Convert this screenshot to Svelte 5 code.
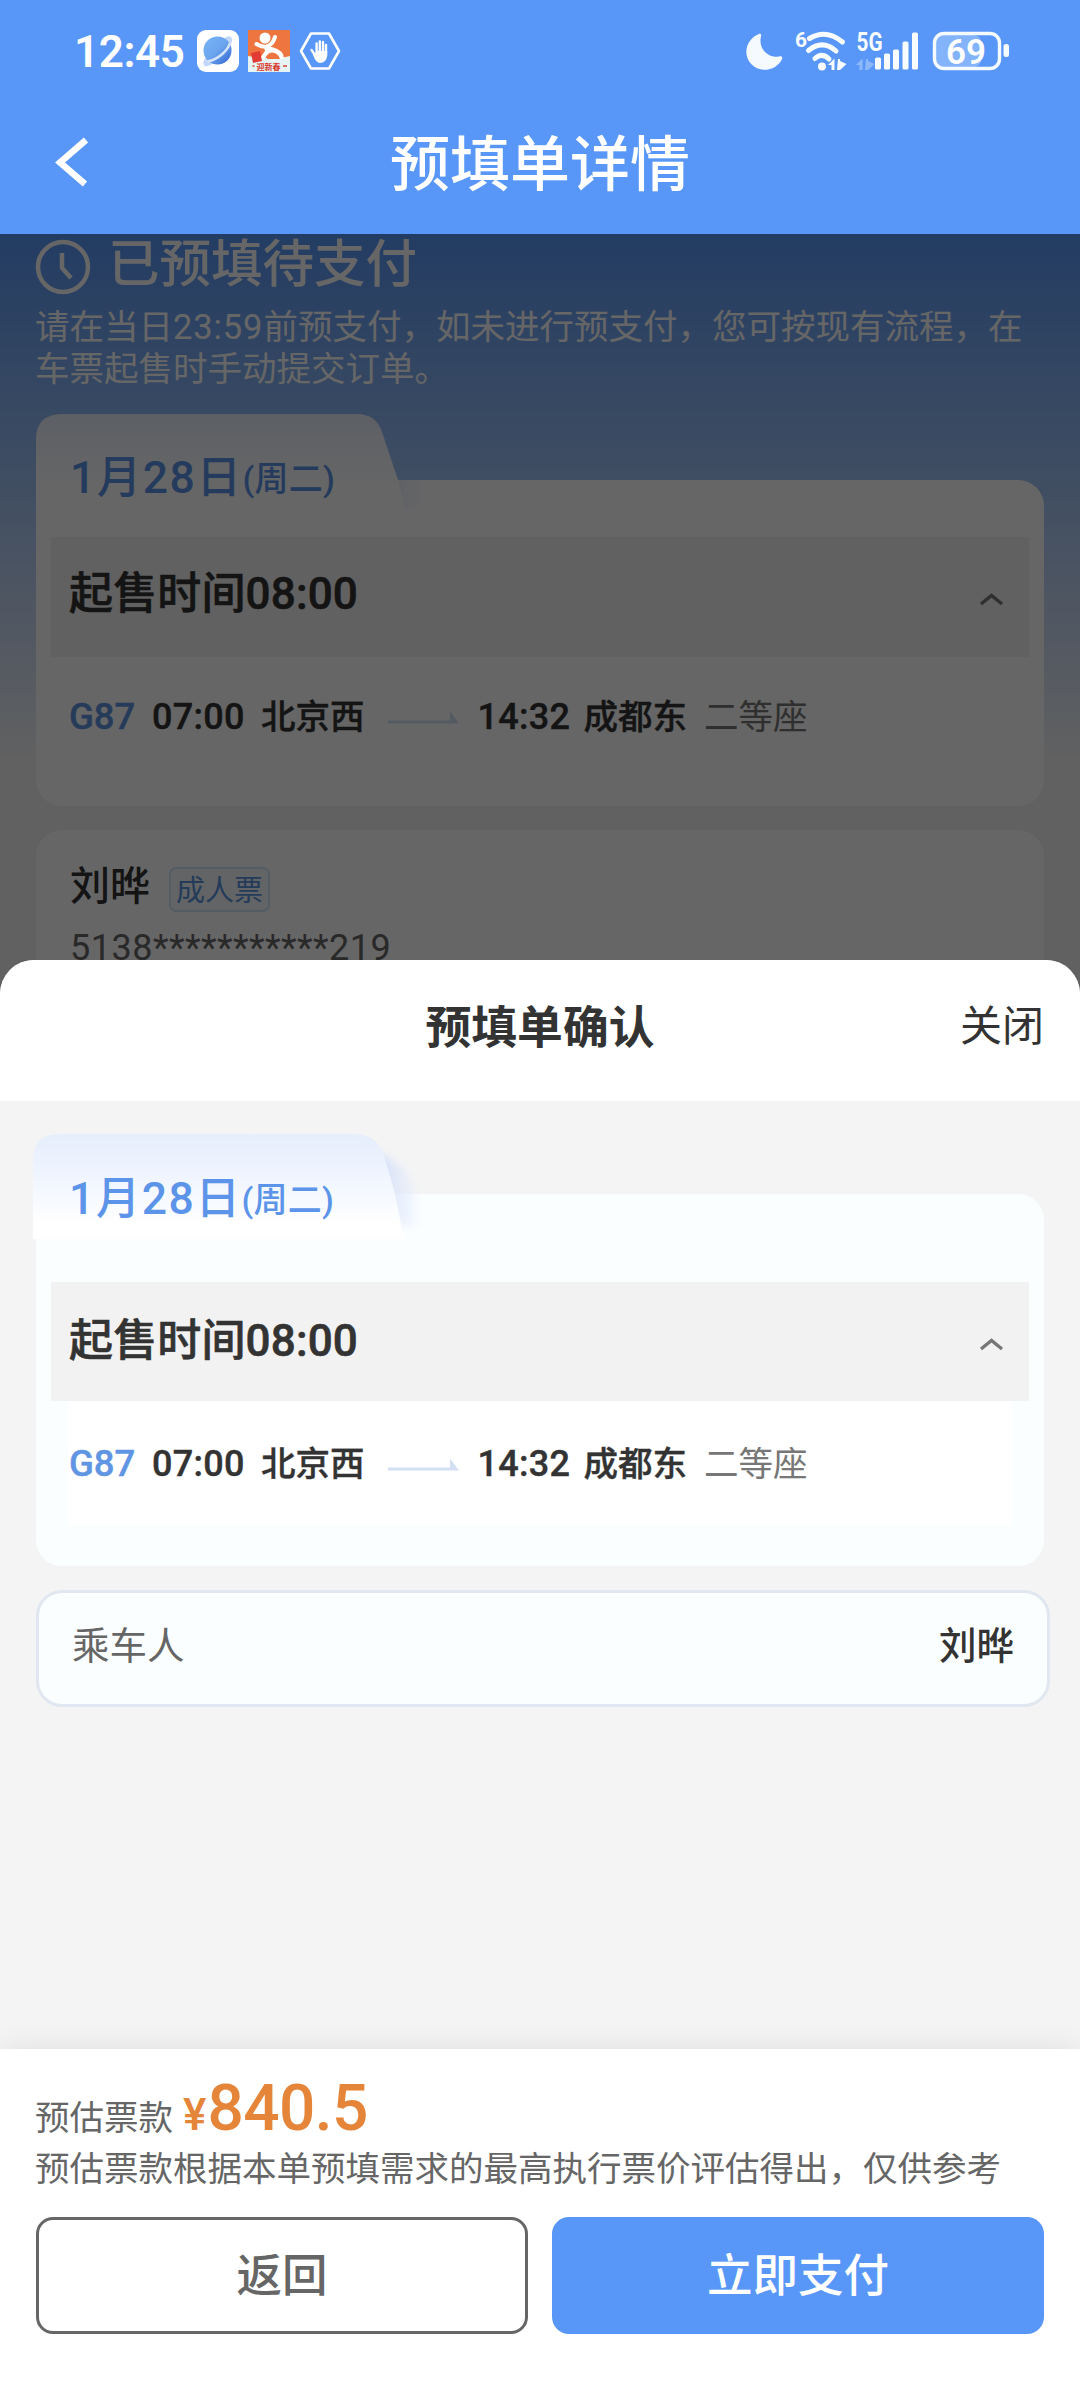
<script>
  const order = {
    date: '1月28日',
    week: '(周二)',
    saleTime: '起售时间08:00',
    train: 'G87',
    departTime: '07:00',
    from: '北京西',
    arriveTime: '14:32',
    to: '成都东',
    seat: '二等座'
  };
  const bars = [
    { x: 28, h: 12 },
    { x: 37, h: 16 },
    { x: 46, h: 20 },
    { x: 55.5, h: 28 },
    { x: 65, h: 37 }
  ];
</script>

{#snippet itinerary()}
  <div class="strip">
    <span class="sale">{order.saleTime}</span>
    <svg class="fold" width="24" height="14" viewBox="0 0 24 14">
      <path d="M2 12 L12.500 3.500 L23 12" fill="none" stroke="#777" stroke-width="3.400" />
    </svg>
  </div>
  <div class="leg">
    <span class="train">{order.train}</span>
    <span class="time">{order.departTime}</span>
    <span class="station">{order.from}</span>
    <svg class="arrow" width="71" height="14" viewBox="0 0 71 14">
      <path d="M0 9.5 H62 V0.5 L71 12.5 H0 Z" fill="#d3e0f3" />
    </svg>
    <span class="time arrive">{order.arriveTime}</span>
    <span class="station">{order.to}</span>
    <span class="seat">{order.seat}</span>
  </div>
{/snippet}

<div class="screen">
  <header>
    <div class="status">
      <span class="clock">12:45</span>
      <svg class="app" width="42" height="42" viewBox="0 0 42 42">
        <defs>
          <linearGradient id="globe" x1="0" y1="0" x2="1" y2="1">
            <stop offset="0" stop-color="#79b4f5" />
            <stop offset="0.5" stop-color="#6ba5ee" />
            <stop offset="1" stop-color="#2f62d0" />
          </linearGradient>
        </defs>
        <rect width="42" height="42" rx="9" fill="#fff" />
        <path d="M29 7 C36 4 37 11 32 18 C26 27 16 35 9 36.500 C5 36 6 31 9 27 Z" fill="#c3d8f8" />
        <circle cx="20.500" cy="20.500" r="14" fill="url(#globe)" />
        <path d="M33 13 C31 20 22 29 10.500 31.500" fill="none" stroke="#d5e4fb" stroke-width="2.600" />
      </svg>
      <svg class="app" width="42" height="42" viewBox="0 0 42 42">
        <rect width="42" height="42" fill="#ee7540" />
        <path d="M0 26 L12 28 L33 28 L42 26 V42 H0 Z" fill="#e6f5f4" />
        <path d="M19 29 Q20 24 26 24 Q32 24 34 29 Z" fill="#ee7540" />
        <circle cx="17" cy="8" r="5.500" fill="#fff" />
        <path d="M8.500 14 Q15 18 20 16 Q25 14 27 7" fill="none" stroke="#fff" stroke-width="4" stroke-linecap="round" />
        <path d="M16 17 L24 17 Q36 20 36 29 L32 29 Q30 22.500 24 22.500 Q19 23 17 29 L12 28 L17 21 Z" fill="#fff" />
        <path d="M3 23 L12 21 L14 31 L5 33 Z" fill="#e23a34" />
        <text x="8.500" y="40" class="tiny">迎新春</text>
        <path d="M4.500 36 h2 M35 36 h4" stroke="#d8442f" stroke-width="1.500" />
      </svg>
      <svg class="hand" width="42" height="38" viewBox="0 0 42 38">
        <path d="M12 1.5 H30 L40 19 L30 36.5 H12 L2 19 Z" fill="none" stroke="#fff" stroke-width="2.6" stroke-linejoin="round" />
        <path d="M12.5 18 L16 23 M17.6 22 V11.5 M20.8 22 V9.5 M24 22 V10 M27 23 V13" fill="none" stroke="#fff" stroke-width="2.4" stroke-linecap="round" />
        <path d="M14 20 L17 22 V19 H28.2 V24 Q27 31 21 31 Q17 31 14 23 Z" fill="#fff" />
      </svg>
      <span class="grow"></span>
      <svg class="moon" width="37" height="37" viewBox="0 0 37 37">
        <path d="M12.5 1.2 C14.5 0.2 15.6 1.5 15 3.6 C12 15 22 26 33 23.4 C35.5 22.7 37 24 36 26.2 C33 32.5 26 36.8 18.5 36.8 C8.5 36.8 0.3 28.8 0.3 18.8 C0.3 11 5.5 4 12.5 1.2 Z" fill="#f5faff" />
      </svg>
      <svg class="wifi" width="54" height="42" viewBox="0 0 54 42">
        <text x="0" y="17" class="six">6</text>
        <g fill="none" stroke="#f8fcff" stroke-width="5" stroke-linecap="round">
          <path d="M14.5 8.5 Q31 -1.500 47.500 12" />
          <path d="M13.5 20.5 Q27.5 9 41 21" />
          <path d="M20 28.5 Q27 22 34 29" />
        </g>
        <circle cx="27" cy="36.5" r="4" fill="#f8fcff" />
        <path d="M33 35 L39.5 28.5 V40 H36.5 V35 Z M43 29 H45 V31 L51.5 34 L45 40 H42 Z" fill="#f8fcff" />
      </svg>
      <svg class="signal" width="72" height="42" viewBox="0 0 72 42">
        <text x="0.5" y="20.500" class="fiveg" textLength="26" lengthAdjust="spacingAndGlyphs">5G</text>
        <path d="M0 35 L6.5 28.5 V40 H3.5 V35 Z M10 29 H12 V31 L18.5 34 L12 40 H9 Z" fill="#8db9fb" />
        {#each bars as b}
          <rect x={b.x - 9} y={39.5 - b.h} width="6" height={b.h} rx="1.5" fill="#f8fcff" />
        {/each}
      </svg>
      <svg class="battery" width="77" height="38" viewBox="0 0 77 38">
        <rect x="3" y="3" width="45" height="32" rx="7" fill="#83b3fb" />
        <rect x="1.5" y="1.5" width="65" height="35" rx="9.5" fill="none" stroke="#f5faff" stroke-width="3.4" />
        <rect x="70.5" y="12" width="5.5" height="13" rx="2.5" fill="#f5faff" />
        <text x="33" y="31.500" class="pct">69</text>
      </svg>
    </div>
    <nav>
      <svg class="back" width="34" height="50" viewBox="0 0 34 50">
        <path d="M31 3 L5 25.5 L30 47" fill="none" stroke="#fff" stroke-width="6.5" stroke-linejoin="miter" />
      </svg>
      <h1>预填单详情</h1>
    </nav>
  </header>

  <main>
    <div class="state">
      <svg width="56" height="56" viewBox="0 0 56 56">
        <circle cx="28" cy="28" r="25" fill="none" stroke="#fff" stroke-width="4.5" />
        <path d="M27 14 V29 L36 39" fill="none" stroke="#fff" stroke-width="4.5" />
      </svg>
      <h2>已预填待支付</h2>
    </div>
    <p class="notice">请在当日<span class="deadline">23:59</span>前预支付，如未进行预支付，您可按现有流程，在车票起售时手动提交订单。</p>
    <section class="ticket">
      <svg class="tab" width="410" height="100" viewBox="0 0 410 100">
        <defs>
          <linearGradient id="tabA" x1="0" y1="0" x2="0" y2="1">
            <stop offset="0" stop-color="#e8effc" />
            <stop offset="0.75" stop-color="#fff" />
          </linearGradient>
          <linearGradient id="glowA" x1="0" y1="0" x2="1" y2="0">
            <stop offset="0" stop-color="#f0f4fd" />
            <stop offset="1" stop-color="#fff" />
          </linearGradient>
        </defs>
        <path d="M360 66 H392 V88 L369 96 Z" fill="url(#glowA)" />
        <path d="M0 26 Q0 0 26 0 H321 Q340 0 346 18 L362 66 L369 98 H0 Z" fill="url(#tabA)" />
      </svg>
      <div class="date"><b>{order.date}</b><i>{order.week}</i></div>
      <div class="card">{@render itinerary()}</div>
    </section>
    <section class="person">
      <div class="who"><b>刘晔</b><span class="badge">成人票</span></div>
      <div class="idno">5138***********219</div>
    </section>
    <div class="mask"></div>
  </main>

  <section class="sheet">
    <div class="sheet-head">
      <h3>预填单确认</h3>
      <span class="close">关闭</span>
    </div>
    <div class="sheet-body">
      <section class="ticket light">
        <svg class="tab" width="410" height="106" viewBox="0 0 410 106">
          <defs>
            <linearGradient id="tabB" x1="0" y1="0" x2="0" y2="1">
              <stop offset="0" stop-color="#e6eefc" />
              <stop offset="0.45" stop-color="#f1f6ff" />
              <stop offset="0.85" stop-color="#fff" />
            </linearGradient>
            <linearGradient id="glowB" x1="0" y1="0" x2="1" y2="0">
              <stop offset="0" stop-color="#cbdaf9" />
              <stop offset="1" stop-color="#e3ecfc" stop-opacity="0.3" />
            </linearGradient>
            <filter id="soft" x="-50%" y="-30%" width="200%" height="160%">
              <feGaussianBlur stdDeviation="4" />
            </filter>
          </defs>
          <path d="M340 18 Q366 24 378 46 Q388 68 382 92 L366 92 Z" fill="url(#glowB)" filter="url(#soft)" />
          <path d="M0 26 Q0 0 26 0 H321 Q342 0 350 18 L361 56 L371 105 H0 Z" fill="url(#tabB)" />
        </svg>
        <div class="date"><b>{order.date}</b><i>{order.week}</i></div>
        <div class="card">{@render itinerary()}</div>
      </section>
      <div class="rider"><span>乘车人</span><b>刘晔</b></div>
    </div>
    <footer>
      <div class="total">
        <span>预估票款</span><em>¥</em><strong>840.5</strong>
      </div>
      <p class="hint">预估票款根据本单预填需求的最高执行票价评估得出，仅供参考</p>
      <div class="actions">
        <button class="ghost">返回</button>
        <button class="primary">立即支付</button>
      </div>
    </footer>
  </section>
</div>

<style>
  :global(body) {
    margin: 0;
    background: #f4f4f4;
  }
  .screen {
    width: 1080px;
    height: 2400px;
    overflow: hidden;
    display: flex;
    flex-direction: column;
    font-family: Roboto, 'Noto Sans CJK SC', sans-serif;
    color: #333;
    position: relative;
  }
  .screen * {
    box-sizing: border-box;
  }
  h1, h2, h3, p {
    margin: 0;
  }
  h1, h2, h3, .close, .who, .rider {
    font-family: 'Noto Sans CJK SC', sans-serif;
  }
  b, i, em, strong {
    font-style: normal;
    font-weight: 500;
  }
  svg {
    overflow: visible;
    flex: none;
  }
  header {
    flex: none;
    height: 234px;
    background: #5897f7;
    color: #fff;
  }
  .status {
    height: 102px;
    padding: 0 70px 0 74px;
    display: flex;
    align-items: center;
  }
  .clock {
    font-size: 44px;
    font-weight: 600;
    width: 123px;
    line-height: 102px;
    letter-spacing: -0.4px;
    padding-top: 1px;
    white-space: nowrap;
  }
  .app {
    margin-right: 9px;
  }
  .grow {
    flex: 1;
  }
  .tiny {
    font-size: 8px;
    font-weight: 700;
    fill: #d8342a;
  }
  .six {
    font-size: 21px;
    font-weight: 700;
    fill: #f8fcff;
  }
  .fiveg {
    font-size: 26px;
    font-weight: 700;
    fill: #f8fcff;
  }
  .pct {
    font-size: 35px;
    font-weight: 600;
    fill: #fff;
    text-anchor: middle;
  }
  .moon {
    margin-right: 12px;
  }
  .wifi {
    margin-right: 7px;
  }
  .signal {
    margin-right: 5px;
  }
  nav {
    height: 132px;
    padding: 0 55px;
    display: grid;
    grid-template-columns: 34px 1fr 34px;
    align-items: start;
  }
  .back {
    margin-top: 35px;
  }
  h1 {
    font-size: 60px;
    font-weight: 500;
    line-height: 115px;
    text-align: center;
  }

  main {
    position: relative;
    z-index: 0;
    height: 766px;
    flex: none;
    overflow: hidden;
    padding: 0 36px;
    background: linear-gradient(#5897f7 0, #f3f3f3 530px);
  }
  .mask {
    position: absolute;
    z-index: 5;
    inset: 0;
    background: rgba(0, 0, 0, 0.6);
  }
  .state {
    height: 66px;
    display: flex;
    color: #fff;
  }
  .state svg {
    margin: 5px 17px 0 -1px;
  }
  h2 {
    font-size: 51.5px;
    font-weight: 500;
    line-height: 52px;
  }
  .notice {
    color: #fff;
    font-size: 34.5px;
    line-height: 42px;
    height: 114px;
    padding-top: 6px;
    margin-left: -1px;
    width: 1000px;
  }
  .deadline {
    letter-spacing: 0.9px;
  }
  .ticket {
    position: relative;
    height: 392px;
    padding-top: 66px;
  }
  .tab {
    position: absolute;
    left: 0;
    top: 0;
    z-index: 1;
  }
  .date {
    position: absolute;
    z-index: 2;
    left: 34px;
    top: 36px;
    line-height: 56px;
    color: #5b94e8;
    white-space: nowrap;
  }
  .date b {
    font-size: 44.5px;
    letter-spacing: 1.5px;
  }
  .date i {
    font-size: 34px;
    letter-spacing: 0.3px;
    vertical-align: 2px;
  }
  .card {
    height: 326px;
    padding: 57px 15px 0;
    background: #fff;
    border-radius: 26px;
  }
  .strip {
    height: 120px;
    background: #f2f2f2;
    display: flex;
    justify-content: space-between;
    align-items: center;
    padding: 0 26px 0 18px;
  }
  .sale {
    font-size: 44px;
    letter-spacing: 0.15px;
    font-weight: 500;
    line-height: 60px;
    padding-bottom: 6px;
    -webkit-text-stroke: 0.6px #333;
  }
  .fold {
    margin-top: 3px;
  }
  .leg {
    height: 118px;
    padding: 2px 0 0 18px;
    display: flex;
    align-items: center;
    font-size: 34.5px;
    font-weight: 500;
    line-height: 50px;
    white-space: nowrap;
    -webkit-text-stroke: 0.4px;
  }
  .train {
    width: 83px;
    color: #5f95e2;
    font-size: 36.5px;
  }
  .time {
    width: 109px;
    font-size: 36px;
    letter-spacing: 0.3px;
  }
  .arrow {
    margin: 2px 19px 0 23px;
  }
  .arrive {
    width: 106px;
  }
  .seat {
    color: #777;
    font-weight: 400;
    margin-left: 17px;
    -webkit-text-stroke: 0;
  }
  .person {
    margin-top: 24px;
    height: 300px;
    background: #fff;
    border-radius: 26px;
    padding: 27px 34px;
  }
  .who {
    display: flex;
    height: 56px;
  }
  .who b {
    font-size: 40px;
    line-height: 52px;
    width: 99px;
  }
  .badge {
    width: 101px;
    height: 45px;
    margin-top: 10px;
    border: 2px solid #d3e6fb;
    border-radius: 7px;
    background: #f8fbff;
    color: #5b94e0;
    font-size: 29px;
    line-height: 39px;
    text-align: center;
    white-space: nowrap;
  }
  .idno {
    color: #666;
    font-size: 36px;
    letter-spacing: 0.5px;
    line-height: 70px;
  }

  .sheet {
    position: relative;
    z-index: 3;
    margin-top: -40px;
    height: 1440px;
    flex: none;
    display: flex;
    flex-direction: column;
    background: #f4f4f4;
    border-radius: 34px 34px 0 0;
    overflow: hidden;
  }
  .sheet-head {
    height: 141px;
    background: #fff;
    padding: 0 36px;
    display: grid;
    grid-template-columns: 1fr auto 1fr;
  }
  h3 {
    grid-column: 2;
    font-size: 45.8px;
    font-weight: 700;
    line-height: 128px;
  }
  .close {
    text-align: right;
    font-size: 42px;
    line-height: 126px;
  }
  .sheet-body {
    flex: 1;
    padding: 33px 36px 0;
  }
  .light {
    height: 432px;
    padding-top: 60px;
  }
  .light .tab {
    left: -3px;
  }
  .light .date {
    top: 37px;
    left: 33px;
  }
  .light .card {
    height: 372px;
    padding-top: 88px;
    background: #fbfeff;
  }
  .light .strip {
    height: 119px;
  }
  .light .sale {
    padding-bottom: 2px;
  }
  .light .fold {
    margin-top: 4px;
  }
  .light .leg {
    margin: 0 17px;
    padding-left: 1px;
    height: 124px;
    background: #fff;
  }
  .rider {
    width: 1014px;
    height: 117px;
    margin-top: 24px;
    border: 3px solid #e1e7f0;
    border-radius: 26px;
    background: #fbfeff;
    padding: 0 33px;
    display: flex;
    justify-content: space-between;
    font-size: 37.5px;
    line-height: 99px;
  }
  .rider span {
    color: #666;
  }
  footer {
    height: 351px;
    background: #fff;
    padding: 23px 36px 0;
    box-shadow: 0 0 28px rgba(0, 0, 0, 0.09);
  }
  .total {
    height: 72px;
    display: flex;
    align-items: baseline;
    line-height: 74px;
    color: #666;
    font-size: 34.5px;
    white-space: nowrap;
    margin-left: -1px;
  }
  em {
    color: #e5853a;
    font-size: 44px;
    margin-left: 10px;
  }
  strong {
    color: #e5853a;
    font-size: 64px;
    letter-spacing: -0.6px;
    margin-left: 1px;
  }
  .hint {
    color: #666;
    font-size: 34.5px;
    line-height: 50px;
    height: 73px;
    white-space: nowrap;
    margin-left: -1px;
  }
  .actions {
    display: grid;
    grid-template-columns: 1fr 1fr;
    gap: 24px;
  }
  button {
    height: 117px;
    border-radius: 17px;
    font: 500 45.5px 'Noto Sans CJK SC', sans-serif;
    padding: 0 0 8px;
  }
  .ghost {
    border: 3px solid #666;
    background: #fff;
    color: #666;
  }
  .primary {
    border: 0;
    background: #5897f7;
    color: #fff;
  }
</style>
